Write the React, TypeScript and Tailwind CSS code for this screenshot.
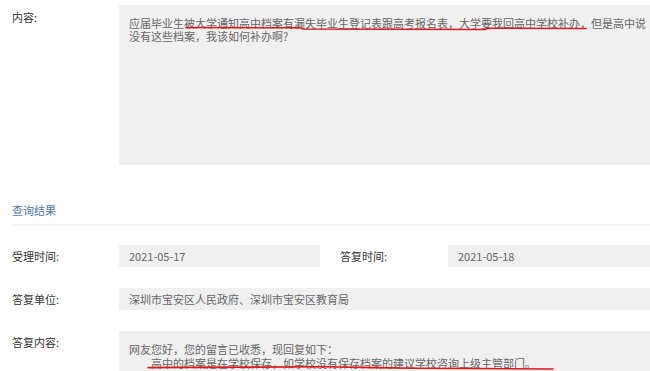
export default function App() {
    return (
        <div className="relative w-[650px] h-[371px] overflow-hidden bg-white font-['Noto_Sans_CJK_SC','Noto_Sans',sans-serif] text-[11px] leading-[13px]">
            <div className="flex pt-[5px]">
                <div className="w-[119px] shrink-0 pl-3 pt-[6px] text-[#333]">内容:</div>
                <div className="h-[160px] flex-1 bg-[#f0f0f0] pl-[10px] pr-[2px] pt-3 text-[#666]">
                    应届毕业生被大学通知高中档案有漏失毕业生登记表跟高考报名表，大学要我回高中学校补办，但是高中说没有这些档案，我该如何补办啊?
                </div>
            </div>

            <div className="mt-[39px] pl-3 text-[#4a7ab5]">查询结果</div>
            <div className="ml-3 mt-[7px] h-[2px] bg-[#f6f6f6]" />

            <div className="mt-[19px] flex h-[22px] items-center">
                <div className="w-[119px] shrink-0 pl-3 text-[#333]">受理时间:</div>
                <div className="flex h-full w-[201px] shrink-0 items-center bg-[#f0f0f0] pl-[10px] text-[#666]">2021-05-17</div>
                <div className="ml-[20px] w-[108px] shrink-0 text-[#333]">答复时间:</div>
                <div className="flex h-full flex-1 items-center bg-[#f0f0f0] pl-[10px] text-[#666]">2021-05-18</div>
            </div>

            <div className="mt-[21px] flex h-[22px] items-center">
                <div className="w-[119px] shrink-0 pl-3 text-[#333]">答复单位:</div>
                <div className="flex h-full flex-1 items-center bg-[#f0f0f0] pl-[10px] text-[#666]">
                    深圳市宝安区人民政府、深圳市宝安区教育局
                </div>
            </div>

            <div className="mt-[21px] flex">
                <div className="w-[119px] shrink-0 pl-3 pt-[5px] text-[#333]">答复内容:</div>
                <div className="h-[60px] flex-1 bg-[#f0f0f0] px-[10px] pt-[11px] leading-[14px] text-[#666]">
                    <div>网友您好，您的留言已收悉，现回复如下：</div>
                    <div>　　高中的档案是在学校保存，如学校没有保存档案的建议学校咨询上级主管部门。</div>
                </div>
            </div>

            <svg className="pointer-events-none absolute inset-0" width="650" height="371" viewBox="0 0 650 371">
                <path
                    d="M186 27.5 L300 27.8 L303 29 L485 29.5 L488 28.2 L586 28.5"
                    fill="none"
                    stroke="#e01818"
                    strokeWidth="1.6"
                    strokeLinecap="round"
                />
                <path
                    d="M148 367.6 L178 367.4 L325 366.8 L375 367.6 L418 368.3 L553 369"
                    fill="none"
                    stroke="#e01818"
                    strokeWidth="1.6"
                    strokeLinecap="round"
                />
            </svg>
        </div>
    );
}
